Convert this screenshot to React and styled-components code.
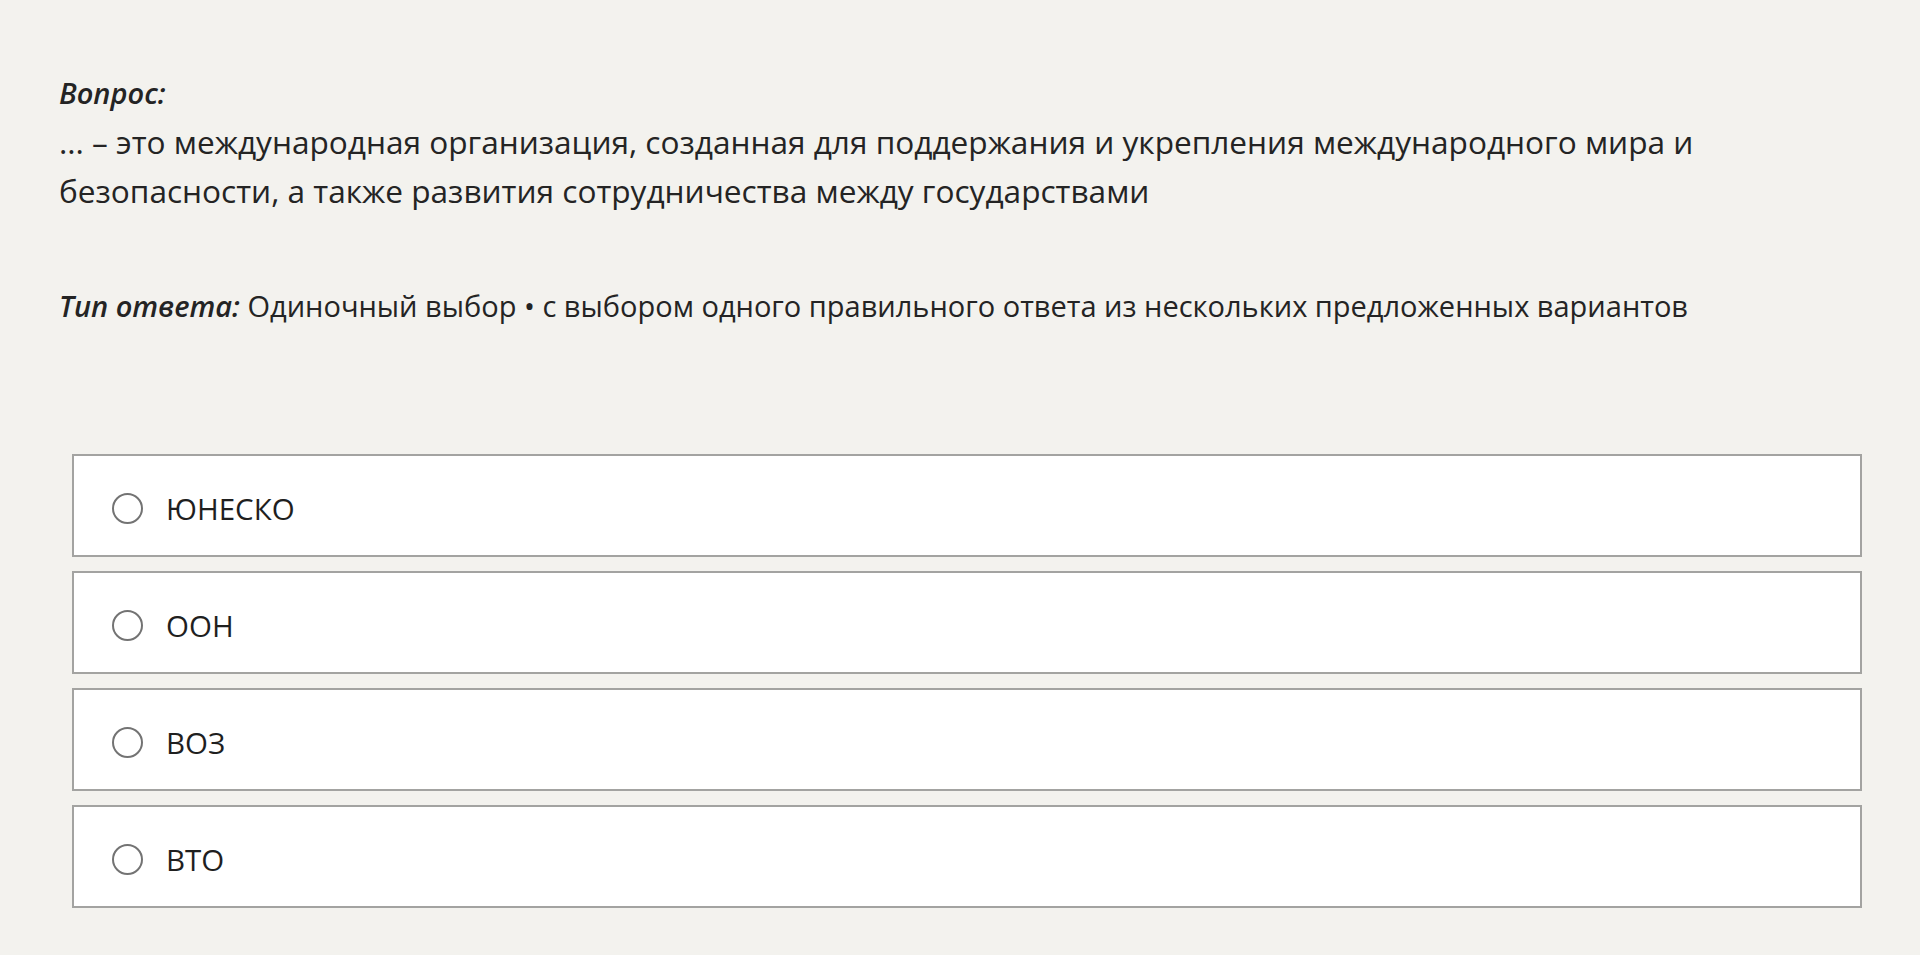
import React from "react";
import styled, { createGlobalStyle } from "styled-components";

const Global = createGlobalStyle`
  html, body { margin: 0; padding: 0; }
  body {
    background: #f3f2ee;
    font-family: "Open Sans", "Noto Sans", sans-serif;
    color: #242424;
  }
`;

const Page = styled.main`
  padding: 68px 58px 40px 59px;
`;

const QuestionBlock = styled.section`
  max-width: 1720px;
  font-size: 29px;
  line-height: 49px;
`;

const Label = styled.span`
  font-weight: 600;
  font-style: italic;
`;

const LabelLine = styled.div``;

const QuestionText = styled.p`
  margin: 0;
  font-size: 31.6px;
`;

const AnswerType = styled.p`
  margin: 66px 0 0;
  font-size: 29px;
  line-height: 49px;
`;

const Options = styled.ul`
  list-style: none;
  margin: 124px 0 0 13px;
  padding: 0;
  display: flex;
  flex-direction: column;
  gap: 14px;
`;

const Option = styled.li`
  box-sizing: border-box;
  height: 103px;
  background: #ffffff;
  border: 2px solid #a3a3a1;
  display: flex;
  align-items: center;
  gap: 23px;
  padding: 6px 0 0 38px;
  cursor: pointer;
`;

const Radio = styled.span`
  box-sizing: border-box;
  flex: none;
  width: 31px;
  height: 31px;
  border-radius: 50%;
  border: 2px solid #737373;
  background: #fff;
`;

const OptionText = styled.span`
  font-size: 29.5px;
  line-height: 40px;
  color: #1f1f1f;
`;

const options = ["ЮНЕСКО", "ООН", "ВОЗ", "ВТО"];

export default function App() {
  return (
    <>
      <Global />
      <Page>
        <QuestionBlock>
          <LabelLine>
            <Label>Вопрос:</Label>
          </LabelLine>
          <QuestionText>
            ... – это международная организация, созданная для поддержания и
            укрепления международного мира и безопасности, а также развития
            сотрудничества между государствами
          </QuestionText>
        </QuestionBlock>
        <AnswerType>
          <Label>Тип ответа:</Label> Одиночный выбор • с выбором одного
          правильного ответа из нескольких предложенных вариантов
        </AnswerType>
        <Options>
          {options.map((o) => (
            <Option key={o}>
              <Radio />
              <OptionText>{o}</OptionText>
            </Option>
          ))}
        </Options>
      </Page>
    </>
  );
}
